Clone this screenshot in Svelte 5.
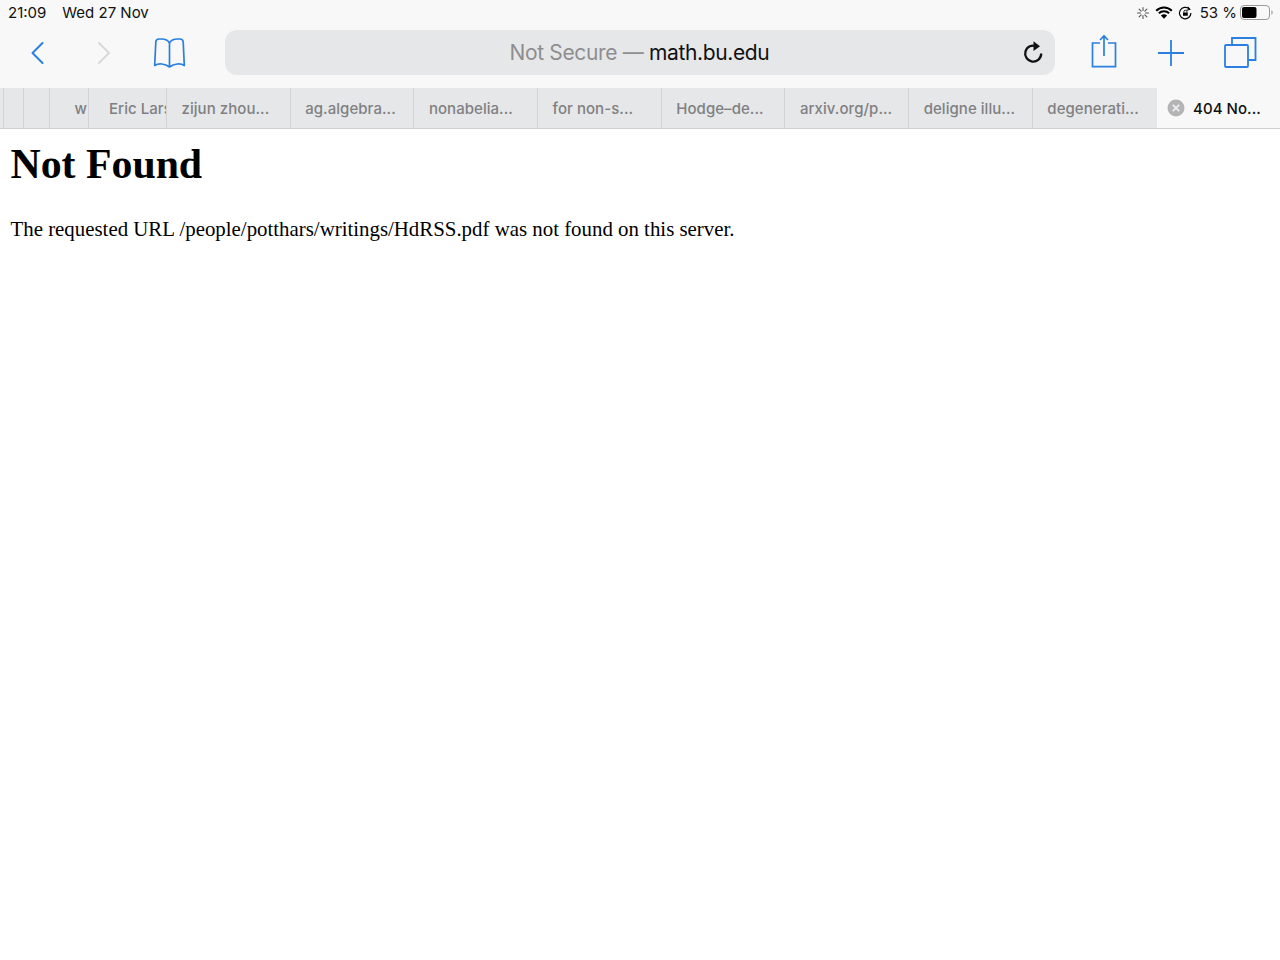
<script>
  const tabs = ['zijun zhou...', 'ag.algebra...', 'nonabelia...', 'for non-s...', 'Hodge–de...', 'arxiv.org/p...', 'deligne illu...', 'degenerati...'];
</script>

<div class="page">
  <header class="chrome">
    <div class="status">
      <div class="time"><span>21:09</span><span>Wed 27 Nov</span></div>
      <div class="sys">
        <svg class="spin" width="14" height="14" viewBox="0 0 14 14" stroke="#555" stroke-width="1.1" stroke-linecap="round"><path d="M7 1.500v3M7 9.500v3M1.500 7h3M9.500 7h3M3.100 3.100l2.100 2.100M8.800 8.800l2.100 2.100M3.100 10.900l2.100-2.100M8.800 5.200l2.100-2.100" /></svg>
        <svg class="wifi" width="18" height="13" viewBox="0 0 18 13"><path d="M9 12.800 5.900 9.500a4.400 4.400 0 0 1 6.200 0Z" fill="#000"/><path d="M3.900 7.300a7.300 7.300 0 0 1 10.200 0M1.200 4.700a11 11 0 0 1 15.600 0" fill="none" stroke="#000" stroke-width="2.100"/></svg>
        <svg class="lock" width="15" height="14" viewBox="0 0 15 14" fill="none" stroke="#000" stroke-width="1.200"><path d="M12.900 7a5.700 5.700 0 1 1-1.700-4"/><path d="M9.600 .8l2.200 2.400-3 1" stroke-width="1.100"/><rect x="5" y="6.600" width="4.800" height="3.200" rx=".4" fill="#000" stroke="none"/><path d="M5.900 6.600V5.700a1.500 1.500 0 0 1 3 0v.9" stroke-width=".9"/></svg>
        <span class="pct">53 %</span>
        <svg class="batt" width="34" height="15" viewBox="0 0 34 15"><rect x=".5" y=".5" width="29" height="14" rx="3.500" fill="none" stroke="#9a9a9a"/><rect x="2" y="2" width="14.500" height="11" rx="2" fill="#000"/><path d="M31.500 5.200c1.400.4 1.400 4.200 0 4.600Z" fill="#8a8a8a"/></svg>
      </div>
    </div>

    <div class="toolbar">
      <svg class="back" width="16" height="26" viewBox="0 0 16 26" fill="none" stroke="#2a7fe0" stroke-width="2" stroke-linecap="round" stroke-linejoin="round"><path d="M12.500 3 2.500 13 12.500 23"/></svg>
      <svg class="fwd" width="16" height="26" viewBox="0 0 16 26" fill="none" stroke="#d9d9db" stroke-width="2" stroke-linecap="round" stroke-linejoin="round"><path d="M3 3 13 13 3 23"/></svg>
      <svg class="book" width="34" height="32" viewBox="0 0 34 32" fill="none" stroke="#2a7fe0" stroke-width="1.700" stroke-linejoin="round" stroke-linecap="round"><path d="M16.500 6C15 3 11.500 2 8.500 2H6C4 2 3 3 2.800 5L1.700 28.500C5.500 26 12 26.500 16.500 30C21 26.500 27.500 26 31.300 28.500L30.200 5C30 3 29 2 27 2H24.500C21.500 2 18 3 16.500 6ZM16.500 6V30"/></svg>

      <div class="url">
        <span class="addr"><span class="dim">Not Secure —&nbsp;</span>math.bu.edu</span>
        <svg class="reload" width="22" height="24" viewBox="0 0 22 24" fill="none" stroke="#111" stroke-width="2.300"><path d="M14.500 6.300a8 8 0 1 0 4.700 7.200"/><path d="M11.500 1.200l6.500 5-6.500 4.800Z" fill="#111" stroke="none"/></svg>
      </div>

      <svg class="share" width="26" height="34" viewBox="0 0 26 34" fill="none" stroke="#2a7fe0" stroke-width="1.700"><path d="M9 8H1.500v23.700h23V8H17M13 21V.8M9 5 13 .8 17 5"/></svg>
      <svg class="plus" width="28" height="28" viewBox="0 0 28 28" stroke="#2a7fe0" stroke-width="1.800"><path d="M14 1v26M1 14h26"/></svg>
      <svg class="copies" width="33" height="32" viewBox="0 0 33 32" fill="none" stroke="#2a7fe0" stroke-width="1.800"><rect x="1" y="9" width="23" height="22" rx="1"/><path d="M8 9V2h23.500V24H24"/></svg>
    </div>

    <nav class="tabs">
      <div class="tab"></div>
      <div class="tab"></div>
      <div class="tab"></div>
      <div class="tab w"><span>w</span></div>
      <div class="tab eric"><span>Eric Lars</span></div>
      {#each tabs as t}
        <div class="tab named">{t}</div>
      {/each}
      <div class="active">
        <svg width="18" height="18" viewBox="0 0 18 18"><circle cx="9" cy="9" r="8.500" fill="#b4b4b6"/><path d="M5.800 5.800l6.400 6.400M12.200 5.800l-6.400 6.400" stroke="#eee" stroke-width="1.800"/></svg>
        <span>404 No...</span>
      </div>
    </nav>
  </header>

  <main>
    <h1>Not Found</h1>
    <p>The requested URL /people/potthars/writings/HdRSS.pdf was not found on this server.</p>
  </main>
</div>

<style>
  :global(body) { margin: 0; background: #fff; }
  .page { width: 1280px; height: 960px; overflow: hidden; background: #fff; }
  .chrome { background: #f8f8f8; font-family: Inter, "Liberation Sans", sans-serif; }
  .status { height: 25px; display: flex; justify-content: space-between; align-items: center; padding: 0 6px 0 8px; font-size: 15px; color: #111; }
  .time { display: flex; gap: 16px; }
  .sys { display: flex; align-items: center; }
  .spin { margin-right: 5px; }
  .wifi { margin-right: 5px; }
  .lock { margin-right: 7px; }
  .pct { margin-right: 3px; }
  .toolbar { height: 63px; box-sizing: border-box; padding-bottom: 10px; display: flex; align-items: center; }
  .back { margin-left: 30px; margin-top: 2px; }
  .fwd { margin-left: 50px; margin-top: 2px; }
  .book { margin-left: 41px; margin-top: 2px; }
  .url { margin-left: 38px; width: 830px; height: 45px; border-radius: 12px; background: #e6e7e9; position: relative; display: flex; align-items: center; justify-content: center; margin-top: 2px; font-size: 21px; color: #111; }
  .addr { letter-spacing: -0.35px; margin-right: 1px; }
  .dim { color: #8e8e90; }
  .reload { position: absolute; right: 11px; top: 10px; }
  .share { margin-left: 36px; margin-top: 1px; }
  .plus { margin-left: 40px; margin-top: 2px; }
  .copies { margin-left: 39px; margin-top: 1px; }
  .tabs { height: 40px; border-bottom: 1px solid #cfcfd1; background: #e6e7e9; display: grid; grid-template-columns: 4px 20px 26px 39px 78px repeat(8, 123.700px) 1fr; font-size: 15px; font-weight: 500; letter-spacing: 0.05px; color: #808082; }
  .tab { border-right: 1px solid #d2d2d4; display: flex; align-items: center; overflow: hidden; white-space: nowrap; }
  .tab:nth-last-child(2) { border-right: 0; }
  .w { justify-content: flex-end; padding-right: 1px; }
  .eric { padding-left: 20px; }
  .named { padding-left: 14.500px; }
  .active { background: #f8f8f8; color: #111; display: flex; align-items: center; padding-left: 10.500px; gap: 8px; }
  main { padding: 0 10.500px; font-family: "Liberation Serif", "Times New Roman", serif; color: #000; }
  h1 { margin: 11px 0 0; font-size: 41.800px; line-height: 48px; font-weight: 700; }
  p { margin: 29px 0 0; font-size: 20.860px; line-height: 25px; }
</style>
